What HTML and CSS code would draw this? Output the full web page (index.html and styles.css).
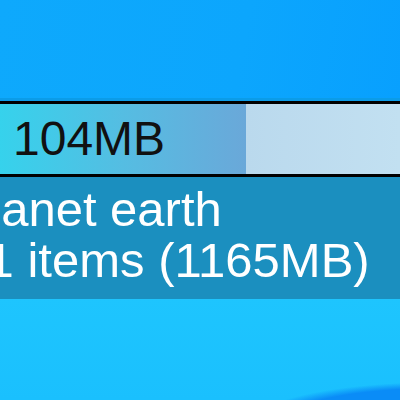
FILE: index.html
```html
<!DOCTYPE html>
<html lang="en">
<head>
  <meta charset="UTF-8">
  <meta name="viewport" content="width=device-width, initial-scale=1.0">
  <title>Drive usage</title>
  <link rel="stylesheet" href="styles.css">
</head>
<body>
  <div class="screen">
    <div class="sky"></div>

    <div class="meter">
      <div class="meter-fill">104MB</div>
      <div class="meter-rest"></div>
    </div>

    <div class="info">
      <div class="info-text">
        <div class="line">planet earth</div>
        <div class="line">11 items (1165MB)</div>
      </div>
    </div>

    <div class="ground"></div>
  </div>
</body>
</html>
```

FILE: styles.css
```css
html, body { margin: 0; padding: 0; }
body { font-family: "Liberation Sans", Arial, sans-serif; background: #1ec4fe; overflow: hidden; }
.screen { width: 400px; height: 400px; display: flex; flex-direction: column; }

.sky { height: 101px; background: linear-gradient(100deg, #0ea9fc 0%, #0ca6fd 60%, #08a0fe 100%); box-shadow: inset 0 -3px 0 #0b9ce8; }

.meter { display: flex; height: 70px; border-top: 3px solid #000; border-bottom: 3px solid #000; }
.meter-fill { width: 233px; padding-left: 13px; font-size: 48px; line-height: 70px; color: #111; background: linear-gradient(90deg, #36d2ec 0%, #55bde2 50%, #6aa8d9 100%); }
.meter-rest { flex: 1; background: linear-gradient(90deg, #bad9ed 0%, #c2e0f1 100%); }

.info { height: 115px; padding-top: 7px; background: #1b8fbf; overflow: hidden; }
.info-text { margin-left: -37px; color: #fff; font-size: 49px; line-height: 51px; white-space: nowrap; }

.ground { flex: 1; background:
  radial-gradient(ellipse 190px 42px at 440px 125px, #0a8cf7 0%, #0a8cf7 85%, rgba(10,140,247,0) 100%),
  linear-gradient(180deg, #1ec5fe 0%, #1ac0fe 100%); }
```
